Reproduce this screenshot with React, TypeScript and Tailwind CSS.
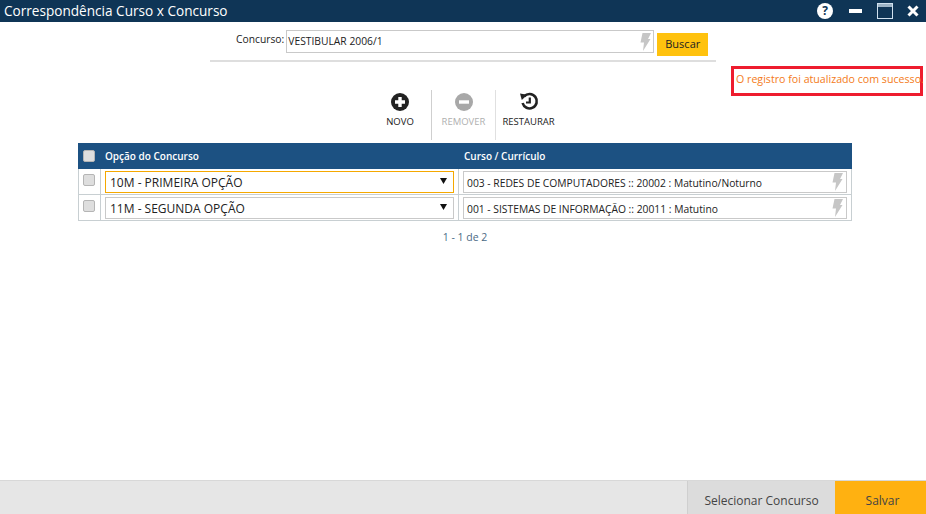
function Bolt() {
  return (
    <svg width="12" height="18" viewBox="0 0 12 18" className="shrink-0">
      <path d="M3.5 0H12L9 6h2.5L4 18l1-8.5H1.5z" fill="#c6c6c6" />
    </svg>
  );
}

function Check() {
  return <div className="w-[12px] h-[12px] rounded-[2px] bg-[#dedede] border border-[#b5b5b5]" />;
}

function Row({ opt, course, active }: { opt: string; course: string; active?: boolean }) {
  return (
    <div className="flex h-[26px] border-l border-r border-b border-[#c8cfd2]">
      <div className="w-[22px] shrink-0 border-r border-[#c8cfd2] pl-[4px] pt-[5px]">
        <Check />
      </div>
      <div className="w-[358px] shrink-0 border-r border-[#c8cfd2] pl-[4px] pr-[4px] pt-[2px]">
        <div className={`h-[22px] border flex items-center justify-between pl-[4px] pr-[6px] pt-[2px] text-[12px] text-[#222] ${active ? "border-[#f5a800]" : "border-[#c9c9c9]"}`}>
          <span>{opt}</span>
          <svg width="7" height="6" viewBox="0 0 7 6" className="mb-[4px]">
            <path d="M0 0h7L3.5 6z" fill="#111" />
          </svg>
        </div>
      </div>
      <div className="flex-1 min-w-0 pl-[4px] pr-[4px] pt-[2px]">
        <div className="h-[22px] border border-[#c9c9c9] flex items-center justify-between pl-[3px] pr-[3px] text-[10.3px] text-[#222]">
          <span className="pt-[3px]">{course}</span>
          <Bolt />
        </div>
      </div>
    </div>
  );
}

export default function App() {
  return (
    <div className="relative w-[926px] h-[514px] flex flex-col bg-white overflow-hidden font-['Open_Sans',sans-serif]">
      <header className="h-[22px] bg-[#0f3556] flex items-center justify-between text-white pl-[4px] pr-[7px] shrink-0">
        <span className="text-[13.6px] leading-none">Correspondência Curso x Concurso</span>
        <div className="flex items-center">
          <div className="w-[16px] h-[16px] rounded-full bg-white text-[#0f3556] flex items-center justify-center text-[12px] font-bold leading-none">?</div>
          <div className="w-[13px] h-[4px] bg-white ml-[16px]" />
          <div className="w-[16px] h-[16px] ml-[15px] border border-[#cfe0ee] bg-[#0f3556] flex flex-col">
            <div className="h-[3px] bg-[#9db4c6]" />
          </div>
          <svg width="12" height="12" viewBox="0 0 12 12" className="ml-[14px]">
            <path d="M1.5 1.5l9 9M10.5 1.5l-9 9" stroke="white" strokeWidth="3" />
          </svg>
        </div>
      </header>

      <main className="flex-1 flex flex-col">
        <div className="w-[506px] ml-[210px] pt-[8px] h-[40px] border-b-2 border-[#dedede] flex items-start">
          <span className="text-[10.3px] text-[#222] ml-[26px] mt-[2px] mr-[2px]">Concurso:</span>
          <div className="w-[368px] h-[23px] border border-[#c9c9c9] flex items-center justify-between pl-[1px] pr-[2px] text-[10.3px] text-[#222]">
            <span>VESTIBULAR 2006/1</span>
            <Bolt />
          </div>
          <button className="w-[51px] h-[23px] mt-[3px] ml-[3px] bg-[#ffc20e] text-[11px] text-[#222]">Buscar</button>
        </div>

        <div className="flex justify-center h-[50px] mt-[28px] ml-[4px]">
          <div className="w-[62px] flex flex-col items-center">
            <svg width="18" height="18" viewBox="0 0 18 18" className="mt-[3px]">
              <circle cx="9" cy="9" r="9" fill="#222" />
              <path d="M9 4v10M4 9h10" stroke="white" strokeWidth="3.4" />
            </svg>
            <span className="text-[9.5px] text-[#222] mt-[4px]">NOVO</span>
          </div>
          <div className="w-[64px] border-l border-[#cfcfcf] flex flex-col items-center">
            <svg width="18" height="18" viewBox="0 0 18 18" className="mt-[3px]">
              <circle cx="9" cy="9" r="9" fill="#a8a8a8" />
              <path d="M4 9h10" stroke="white" strokeWidth="3.4" />
            </svg>
            <span className="text-[9.5px] text-[#b0b0b0] mt-[4px]">REMOVER</span>
          </div>
          <div className="w-[66px] border-l border-[#e0e0e0] flex flex-col items-center">
            <svg width="20" height="19" viewBox="0 0 20 19" className="mt-[2px]">
              <path d="M5.2 4.4A7.2 7.2 0 1 1 3.6 11" fill="none" stroke="#222" strokeWidth="2.6" />
              <path d="M1 1.5l7.4 1.2-5.6 5.2z" fill="#222" />
              <path d="M10.8 5.5v5H7" fill="none" stroke="#222" strokeWidth="2.2" />
            </svg>
            <span className="text-[9.5px] text-[#222] mt-[4px]">RESTAURAR</span>
          </div>
        </div>

        <div className="w-[774px] ml-[78px] mt-[3px]">
          <div className="h-[26px] bg-[#1c5182] flex items-center text-white text-[10px] font-semibold">
            <div className="w-[27px] shrink-0 pl-[5px]">
              <Check />
            </div>
            <div className="w-[359px] shrink-0 pt-[1px]">Opção do Concurso</div>
            <div className="pt-[1px]">Curso / Currículo</div>
          </div>
          <Row opt="10M - PRIMEIRA OPÇÃO" course="003 - REDES DE COMPUTADORES :: 20002 : Matutino/Noturno" active />
          <Row opt="11M - SEGUNDA OPÇÃO" course="001 - SISTEMAS DE INFORMAÇÃO :: 20011 : Matutino" />
          <div className="text-center text-[10.5px] text-[#4a6a85] mt-[9px]">1 - 1 de 2</div>
        </div>
      </main>

      <footer className="h-[34px] bg-[#e6e6e6] border-t border-[#d8d8d8] flex justify-end shrink-0">
        <button className="w-[148px] bg-[#dcdcdc] border-l border-[#cfcfcf] pt-[6px] text-[12px] text-[#444]">Selecionar Concurso</button>
        <button className="w-[91px] bg-[#ffb111] pt-[6px] pl-[4px] text-[12px] text-[#444]">Salvar</button>
      </footer>

      <div className="absolute left-[731px] top-[66px] w-[192px] h-[30px] border-[3px] border-[#ee1c2e] pl-[2px] pb-[2px] flex items-center text-[10.65px] text-[#f47b20] whitespace-nowrap">
        O registro foi atualizado com sucesso.
      </div>
    </div>
  );
}
